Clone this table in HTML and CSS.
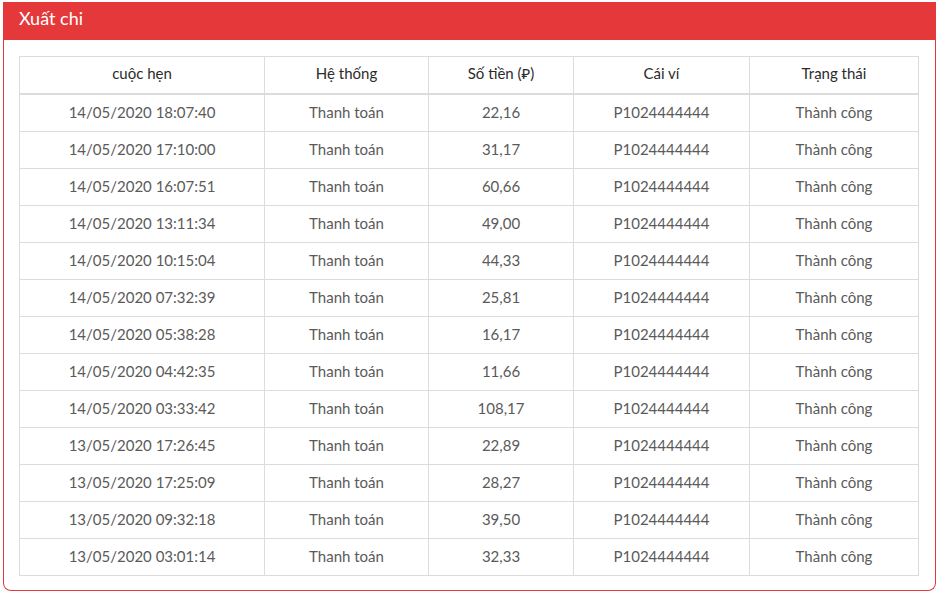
FILE: index.html
```html
<!DOCTYPE html>
<html lang="vi">
<head>
<meta charset="utf-8">
<title>Xuất chi</title>
<link rel="stylesheet" href="styles.css">
</head>
<body>
<div class="card">
  <div class="card-header">Xuất chi</div>
  <div class="card-body">
    <table class="tbl">
      <colgroup>
        <col class="c1"><col class="c2"><col class="c3"><col class="c4"><col class="c5">
      </colgroup>
      <thead>
        <tr><th>cuộc hẹn</th><th>Hệ thống</th><th>Số tiền (₽)</th><th>Cái ví</th><th>Trạng thái</th></tr>
      </thead>
      <tbody>
        <tr><td>14/05/2020 18:07:40</td><td>Thanh toán</td><td>22,16</td><td>P1024444444</td><td>Thành công</td></tr>
        <tr><td>14/05/2020 17:10:00</td><td>Thanh toán</td><td>31,17</td><td>P1024444444</td><td>Thành công</td></tr>
        <tr><td>14/05/2020 16:07:51</td><td>Thanh toán</td><td>60,66</td><td>P1024444444</td><td>Thành công</td></tr>
        <tr><td>14/05/2020 13:11:34</td><td>Thanh toán</td><td>49,00</td><td>P1024444444</td><td>Thành công</td></tr>
        <tr><td>14/05/2020 10:15:04</td><td>Thanh toán</td><td>44,33</td><td>P1024444444</td><td>Thành công</td></tr>
        <tr><td>14/05/2020 07:32:39</td><td>Thanh toán</td><td>25,81</td><td>P1024444444</td><td>Thành công</td></tr>
        <tr><td>14/05/2020 05:38:28</td><td>Thanh toán</td><td>16,17</td><td>P1024444444</td><td>Thành công</td></tr>
        <tr><td>14/05/2020 04:42:35</td><td>Thanh toán</td><td>11,66</td><td>P1024444444</td><td>Thành công</td></tr>
        <tr><td>14/05/2020 03:33:42</td><td>Thanh toán</td><td>108,17</td><td>P1024444444</td><td>Thành công</td></tr>
        <tr><td>13/05/2020 17:26:45</td><td>Thanh toán</td><td>22,89</td><td>P1024444444</td><td>Thành công</td></tr>
        <tr><td>13/05/2020 17:25:09</td><td>Thanh toán</td><td>28,27</td><td>P1024444444</td><td>Thành công</td></tr>
        <tr><td>13/05/2020 09:32:18</td><td>Thanh toán</td><td>39,50</td><td>P1024444444</td><td>Thành công</td></tr>
        <tr><td>13/05/2020 03:01:14</td><td>Thanh toán</td><td>32,33</td><td>P1024444444</td><td>Thành công</td></tr>
      </tbody>
    </table>
  </div>
</div>
</body>
</html>
```

FILE: styles.css
```css
html, body {
  margin: 0;
  background: #fff;
}
body {
  padding: 2px 1px 0 3px;
  font-family: "Lato", "Noto Sans", sans-serif;
  overflow: hidden;
}
.card {
  width: 933px;
  box-sizing: border-box;
  border: 1px solid #e5383b;
  border-top: none;
  border-radius: 0 0 8px 8px;
  height: 589px;
}
.card-header {
  background: #e5383b;
  color: #fff;
  height: 38px;
  margin: 0 -1px;
  padding-left: 16px;
  font-size: 18px;
  line-height: 33px;
}
.card-body {
  padding: 16px 16px 0 15px;
}
.tbl {
  width: 899px;
  border-collapse: collapse;
  table-layout: fixed;
  font-size: 15px;
}
.c1 { width: 245px; }
.c2 { width: 164px; }
.c3 { width: 145px; }
.c4 { width: 176px; }
.c5 { width: 169px; }
.tbl th, .tbl td {
  border: 1px solid #dcdcdc;
  text-align: center;
  padding: 0 0 3px;
  height: 33px;
}
.tbl th {
  font-weight: 400;
  color: #2b2b2b;
  height: 31px;
  padding-bottom: 5px;
  border-bottom: 2px solid #dcdcdc;
}
.tbl td {
  color: #5a5a5a;
  font-weight: 400;
}
```
